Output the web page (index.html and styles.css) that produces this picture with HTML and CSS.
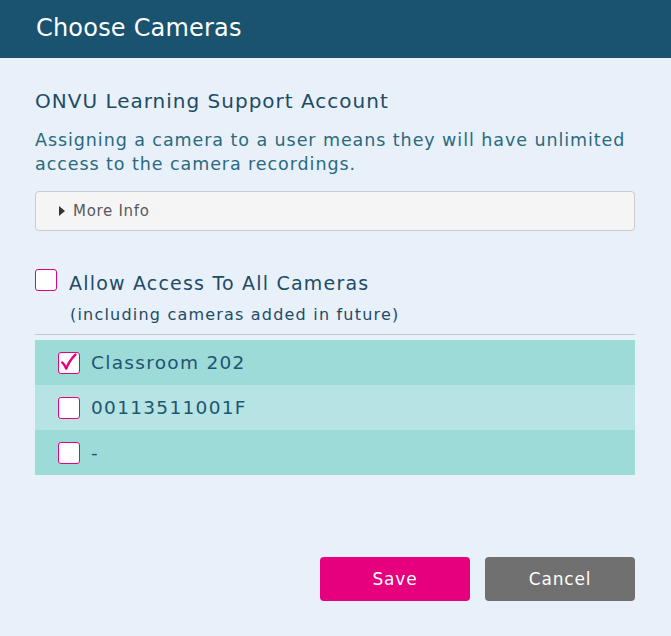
FILE: index.html
```html
<!DOCTYPE html>
<html>
<head>
<meta charset="utf-8">
<link rel="stylesheet" href="styles.css">
</head>
<body>
<div class="dialog">
  <div class="header">Choose Cameras</div>
  <div class="content">
    <h2 class="account">ONVU Learning Support Account</h2>
    <p class="desc">Assigning a camera to a user means they will have unlimited access to the camera recordings.</p>
    <div class="more-info"><span class="tri"></span><span>More Info</span></div>
    <div class="all-row">
      <span class="cb"></span>
      <span class="all-label">Allow Access To All Cameras</span>
    </div>
    <div class="all-sub">(including cameras added in future)</div>
    <div class="rule"></div>
    <div class="list">
      <div class="row row-a">
        <span class="cb"><svg viewBox="0 0 22 22" width="22" height="22"><path d="M4.2 11.6 Q5.5 12.4 8.2 17.6 Q11 10 17.4 3.6" fill="none" stroke="#e6007e" stroke-width="2.4" stroke-linecap="round" stroke-linejoin="round"/></svg></span>
        <span class="name">Classroom 202</span>
      </div>
      <div class="row row-b">
        <span class="cb"></span>
        <span class="name">00113511001F</span>
      </div>
      <div class="row row-a">
        <span class="cb"></span>
        <span class="name">-</span>
      </div>
    </div>
    <div class="footer">
      <button class="btn btn-save">Save</button>
      <button class="btn btn-cancel">Cancel</button>
    </div>
  </div>
</div>
</body>
</html>
```
FILE: styles.css
```css
html, body {
  margin: 0;
  padding: 0;
  background: #e8f0f9;
  font-family: "DejaVu Sans", "Noto Sans", sans-serif;
}
.dialog {
  width: 671px;
  height: 636px;
  background: #e8f0f9;
}
.header {
  height: 58px;
  background: #19536f;
  color: #ffffff;
  font-size: 24px;
  letter-spacing: 0.2px;
  line-height: 56px;
  padding-left: 36px;
}
.content {
  padding: 0 36px 0 35px;
}
.account {
  margin: 31px 0 0 0;
  font-size: 20px;
  font-weight: normal;
  letter-spacing: 1px;
  line-height: 24px;
  color: #1e4b66;
}
.desc {
  margin: 15px 0 0 0;
  font-size: 17.5px;
  letter-spacing: 0.93px;
  line-height: 24px;
  color: #2a6a80;
}
.more-info {
  margin-top: 15px;
  height: 38px;
  border: 1px solid #cbcbcb;
  border-radius: 4px;
  background: #f5f5f5;
  display: flex;
  align-items: center;
  padding-left: 23px;
  font-size: 15px;
  letter-spacing: 0.7px;
  color: #555a5f;
}
.tri {
  width: 0;
  height: 0;
  border-top: 5px solid transparent;
  border-bottom: 5px solid transparent;
  border-left: 6px solid #333333;
  margin-right: 8px;
}
.all-row {
  margin-top: 37px;
  height: 24px;
  display: flex;
  align-items: center;
}
.cb {
  box-sizing: border-box;
  width: 22px;
  height: 22px;
  border: 1.5px solid #e6007e;
  border-radius: 3px;
  background: #ffffff;
  display: inline-flex;
  flex: none;
}
.cb svg {
  margin: -1.5px;
}
.all-label {
  margin-left: 12px;
  font-size: 19px;
  letter-spacing: 1.2px;
  color: #1e4b66;
  position: relative;
  top: 3px;
}
.all-sub {
  margin-top: 11px;
  margin-left: 35px;
  font-size: 16px;
  letter-spacing: 1.2px;
  line-height: 24px;
  color: #1e4b66;
}
.rule {
  margin-top: 7px;
  border-top: 1px solid #c8c8c8;
}
.list {
  margin-top: 5px;
}
.row {
  height: 45px;
  display: flex;
  align-items: center;
  padding-left: 23px;
}
.row-a { background: #9cdbd8; }
.row-b { background: #b6e3e3; }
.name {
  margin-left: 11px;
  font-size: 18.5px;
  letter-spacing: 1.3px;
  color: #1f5570;
}
.footer {
  margin-top: 82px;
  display: flex;
  justify-content: flex-end;
  gap: 15px;
}
.btn {
  width: 150px;
  height: 44px;
  border: none;
  border-radius: 4px;
  color: #ffffff;
  font-family: "DejaVu Sans", "Noto Sans", sans-serif;
  font-size: 17px;
  letter-spacing: 0.8px;
  padding: 0;
}
.btn-save { background: #e6007e; }
.btn-cancel { background: #707070; }
```
